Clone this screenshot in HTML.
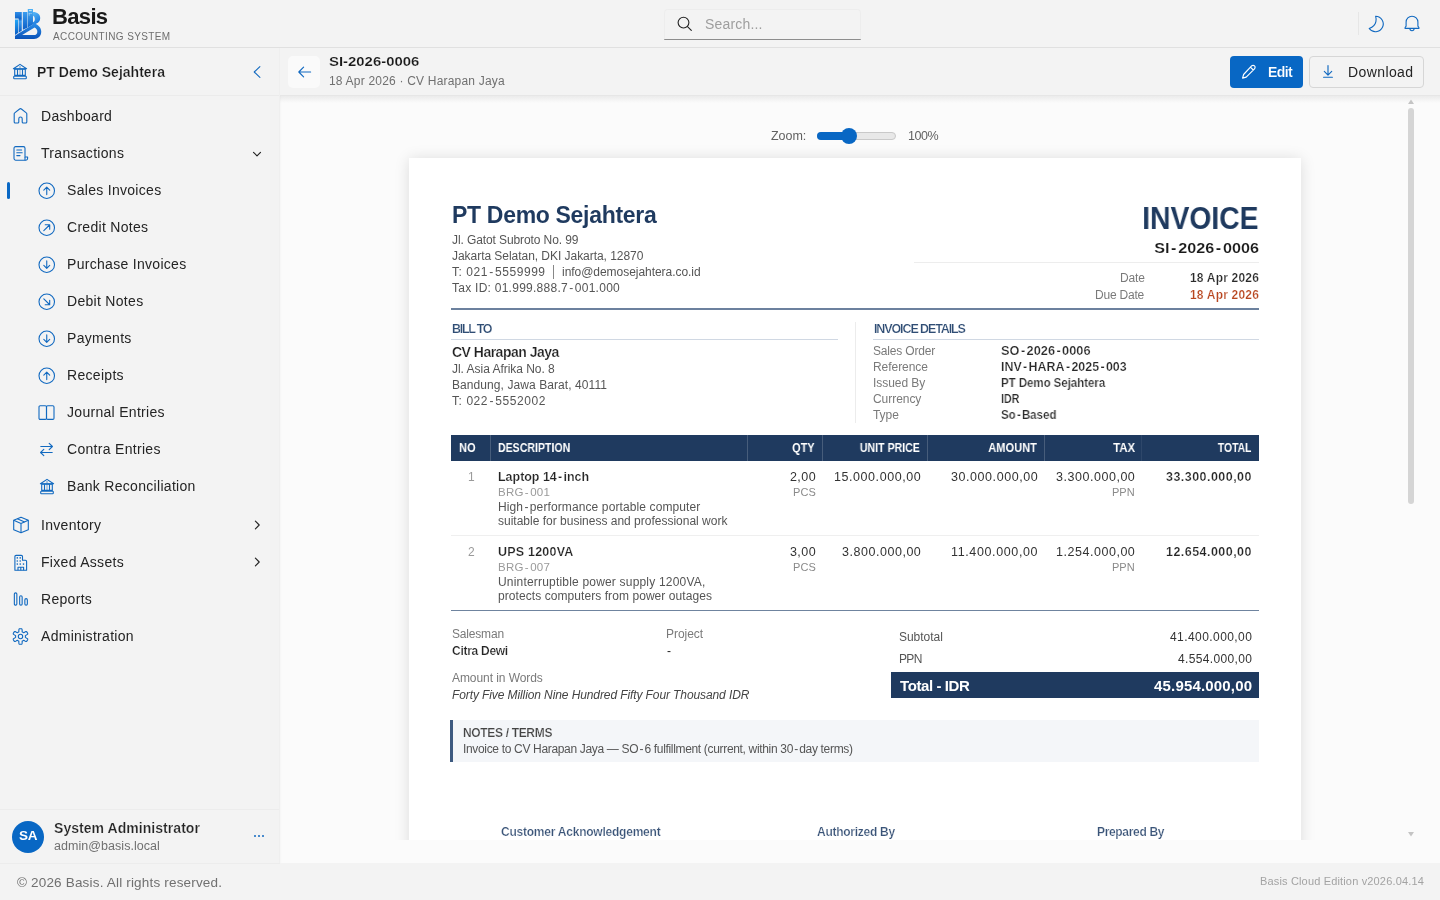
<!DOCTYPE html>
<html><head><meta charset="utf-8"><style>
*{box-sizing:border-box;margin:0;padding:0}
html,body{width:1440px;height:900px;overflow:hidden;background:#f3f3f3;font-family:"Liberation Sans",sans-serif;color:#242424}
.t{position:absolute;white-space:nowrap;line-height:0;will-change:transform}
.b{position:absolute}
svg{position:absolute;display:block;overflow:visible}
</style></head><body>
<div class="b" style="left:0px;top:0px;width:1440px;height:47px;background:#f3f3f3"></div>
<div class="b" style="left:0px;top:47px;width:1440px;height:1px;background:#e0e0e0"></div>
<svg style="left:8px;top:4px;" width="40" height="40" viewBox="0 0 900 900"><defs>
<linearGradient id="g1" x1="0" y1="0" x2="0" y2="1"><stop offset="0" stop-color="#22a6f6"/><stop offset="1" stop-color="#0b5cc4"/></linearGradient>
<linearGradient id="g2" x1="0" y1="0" x2="0" y2="1"><stop offset="0" stop-color="#2f8ee8"/><stop offset="0.33" stop-color="#0d62c8"/><stop offset="0.45" stop-color="#3b9cf0"/><stop offset="1" stop-color="#0d5fc4"/></linearGradient>
<linearGradient id="g3" x1="0" y1="0" x2="0" y2="1"><stop offset="0" stop-color="#3a9cef"/><stop offset="1" stop-color="#0c5ec6"/></linearGradient>
<linearGradient id="g4" x1="0" y1="0" x2="0" y2="1"><stop offset="0" stop-color="#4fb2f6"/><stop offset="1" stop-color="#0f64cb"/></linearGradient>
<linearGradient id="g5" x1="0" y1="0" x2="0.4" y2="1"><stop offset="0" stop-color="#5ab9f8"/><stop offset="1" stop-color="#1876dc"/></linearGradient>
<linearGradient id="g6" x1="0" y1="0" x2="0" y2="1"><stop offset="0" stop-color="#2a8de8"/><stop offset="1" stop-color="#0a52b8"/></linearGradient>
</defs>
<path fill="url(#g2)" d="M157,180 H310 V600 L238,646 V324 H157 Z"/>
<path fill="url(#g1)" d="M157,351 H225 V654 L157,697 Z"/>
<path fill="url(#g3)" d="M333,180 H436 V536 L333,582 Z"/>
<path fill="url(#g4)" d="M445,112 H562 V462 L445,530 Z"/>
<path fill="url(#g5)" fill-rule="evenodd" d="M562,180 C662,180 725,235 725,315 C725,380 690,418 640,440 L562,486 Z M562,262 V410 C592,398 606,368 603,330 C600,292 588,270 562,262 Z"/>
<path fill="url(#g6)" fill-rule="evenodd" d="M157,716 L592,438 C690,470 748,535 748,620 C748,725 672,788 585,788 H157 Z M318,700 H580 C628,700 660,668 660,622 C660,580 636,548 598,528 Z"/>
<g fill="#f3f3f3" opacity="0.9"><rect x="472" y="140" width="62" height="20"/><rect x="466" y="205" width="24" height="16"/><rect x="506" y="205" width="24" height="16"/><rect x="466" y="238" width="24" height="16"/></g>
</svg>
<div class="t" style="top:17px;font-size:22px;color:#1a1a1a;font-weight:bold;letter-spacing:-0.66px;left:51.9px;">Basis</div>
<div class="t" style="top:37px;font-size:10px;color:#6e6e6e;letter-spacing:0.38px;left:52.8px;">ACCOUNTING SYSTEM</div>
<div class="b" style="left:664px;top:9px;width:197px;height:31px;border:1px solid #ededed;border-bottom:none;border-radius:4px 4px 0 0;background:#f3f3f3"></div>
<div class="b" style="left:664px;top:39px;width:197px;height:1px;background:#8d8d8d;border-radius:0 0 2px 2px"></div>
<svg style="left:676px;top:16px;" width="18" height="18" viewBox="0 0 18 18"><circle cx="7.5" cy="6.6" r="5.4" fill="none" stroke="#242424" stroke-width="1.1"/><path d="M11.5,10.6 L15.3,14.3" stroke="#242424" stroke-width="1.15" stroke-linecap="round"/></svg>
<div class="t" style="top:24px;font-size:14px;color:#9e9e9e;letter-spacing:0.17px;left:705.2px;">Search...</div>
<div class="b" style="left:1358px;top:12px;width:1px;height:23px;background:#e6e6e6"></div>
<svg style="left:1366px;top:14px;" width="20" height="20" viewBox="0 0 20 20"><path d="M9.6,2.2 A7.75,7.75 0 1 1 3.2,14.5 C6.6,13.1 9.3,10.9 9.9,7.6 C10.2,5.7 10.1,3.7 9.6,2.2 Z" fill="none" stroke="#1169c0" stroke-width="1.1" stroke-linejoin="round"/></svg>
<svg style="left:1402px;top:14px;" width="20" height="20" viewBox="0 0 20 20"><path d="M4.1,12.2 V8.1 C4.1,4.7 6.7,2.2 10,2.2 C13.3,2.2 15.9,4.7 15.9,8.1 V12.2 L16.9,13.5 V14.4 H3.1 V13.5 Z" fill="none" stroke="#1169c0" stroke-width="1.1" stroke-linejoin="round"/><path d="M7.9,14.6 A2.1,2.1 0 0 0 12.1,14.6" fill="none" stroke="#1169c0" stroke-width="1.1"/></svg>
<div class="b" style="left:0px;top:48px;width:280px;height:815px;background:#f3f3f3"></div>
<div class="b" style="left:0px;top:95px;width:280px;height:1px;background:#ebebeb"></div>
<svg style="left:8px;top:60px;" width="24" height="24" viewBox="0 0 24 24"><g fill="none" stroke="#1169c0" stroke-width="1.1" stroke-linejoin="round"><path d="M5.4,8.8 L12,4.4 L18.6,8.8 Z"/><rect x="6.7" y="9.1" width="10.6" height="6.3"/><path d="M9.5,9.2 V15.3 M14.5,9.2 V15.3"/><rect x="5.7" y="16.2" width="12.6" height="2.5" rx="0.7"/></g><path d="M12,9.4 V15.2" stroke="#1169c0" stroke-width="1" opacity="0.55"/><rect x="11.4" y="6.2" width="1.2" height="1.6" fill="#1169c0" opacity="0.7"/></svg>
<div class="t" style="top:72px;font-size:14px;color:#1a1a1a;font-weight:bold;letter-spacing:0.02px;left:36.6px;-webkit-text-stroke:0.22px #f3f3f3;">PT Demo Sejahtera</div>
<svg style="left:249.5px;top:65px;" width="14" height="14" viewBox="0 0 14 14"><path d="M9.9,1.6 L4.2,7 L9.9,12.4" fill="none" stroke="#1169c0" stroke-width="1.05" stroke-linecap="round" stroke-linejoin="round"/></svg>
<svg style="left:12px;top:107px;" width="17" height="17" viewBox="0 0 17 17"><path d="M2.2,6.9 C2.2,6.5 2.4,6.1 2.7,5.9 L7.6,2 C8.1,1.6 8.9,1.6 9.4,2 L14.3,5.9 C14.6,6.1 14.8,6.5 14.8,6.9 V15 C14.8,15.6 14.4,16 13.8,16 H11.2 C10.6,16 10.2,15.6 10.2,15 V11.8 C10.2,10.8 9.4,10 8.5,10 C7.6,10 6.8,10.8 6.8,11.8 V15 C6.8,15.6 6.4,16 5.8,16 H3.2 C2.6,16 2.2,15.6 2.2,15 Z" fill="none" stroke="#1169c0" stroke-width="1.1"/></svg>
<div class="t" style="top:116px;font-size:14px;color:#242424;letter-spacing:0.30px;left:41.3px;">Dashboard</div>
<svg style="left:12px;top:145px;" width="17" height="17" viewBox="0 0 17 17"><g fill="none" stroke="#1169c0" stroke-width="1.1" stroke-linejoin="round"><path d="M13,12 V3.2 C13,2.3 12.3,1.6 11.4,1.6 H3.6 C2.7,1.6 2,2.3 2,3.2 V13.6 C2,14.5 2.7,15.2 3.6,15.2 H14 C14.9,15.2 15.6,14.5 15.6,13.6 V12 Z"/><path d="M13,15.2 V12" /><path d="M4.8,5 H9.6 M4.8,7.8 H10.2 M4.8,10.6 H8" stroke-linecap="round"/></g></svg>
<div class="t" style="top:153px;font-size:14px;color:#242424;letter-spacing:0.30px;left:41.3px;">Transactions</div>
<svg style="left:251px;top:149px;" width="12" height="9" viewBox="0 0 12 9"><path d="M2.5,3.3 L6,6.8 L9.5,3.3" fill="none" stroke="#242424" stroke-width="1.15" stroke-linecap="round" stroke-linejoin="round"/></svg>
<div class="b" style="left:7px;top:182px;width:3px;height:17px;background:#0867c4;border-radius:2px"></div>
<svg style="left:37.7px;top:181.5px;" width="18" height="18" viewBox="0 0 18 18"><circle cx="8.75" cy="8.75" r="7.75" fill="none" stroke="#1169c0" stroke-width="1.1"/><path d="M8.75,12.6 V5.3 M5.8,8.1 L8.75,5.2 L11.7,8.1" fill="none" stroke="#1169c0" stroke-width="1.1" stroke-linecap="round" stroke-linejoin="round"/></svg>
<div class="t" style="top:190px;font-size:14px;color:#242424;letter-spacing:0.30px;left:67.2px;">Sales Invoices</div>
<svg style="left:37.7px;top:218.5px;" width="18" height="18" viewBox="0 0 18 18"><circle cx="8.75" cy="8.75" r="7.75" fill="none" stroke="#1169c0" stroke-width="1.1"/><path d="M5.8,11.7 L11.5,6 M7.2,5.8 H11.7 V10.3" fill="none" stroke="#1169c0" stroke-width="1.1" stroke-linecap="round" stroke-linejoin="round"/></svg>
<div class="t" style="top:227px;font-size:14px;color:#242424;letter-spacing:0.30px;left:67.2px;">Credit Notes</div>
<svg style="left:37.7px;top:255.5px;" width="18" height="18" viewBox="0 0 18 18"><circle cx="8.75" cy="8.75" r="7.75" fill="none" stroke="#1169c0" stroke-width="1.1"/><path d="M8.75,4.9 V12.2 M5.8,9.4 L8.75,12.3 L11.7,9.4" fill="none" stroke="#1169c0" stroke-width="1.1" stroke-linecap="round" stroke-linejoin="round"/></svg>
<div class="t" style="top:264px;font-size:14px;color:#242424;letter-spacing:0.30px;left:67.2px;">Purchase Invoices</div>
<svg style="left:37.7px;top:292.5px;" width="18" height="18" viewBox="0 0 18 18"><circle cx="8.75" cy="8.75" r="7.75" fill="none" stroke="#1169c0" stroke-width="1.1"/><path d="M5.8,5.8 L11.5,11.5 M11.7,7.2 V11.7 H7.2" fill="none" stroke="#1169c0" stroke-width="1.1" stroke-linecap="round" stroke-linejoin="round"/></svg>
<div class="t" style="top:301px;font-size:14px;color:#242424;letter-spacing:0.30px;left:67.2px;">Debit Notes</div>
<svg style="left:37.7px;top:329.5px;" width="18" height="18" viewBox="0 0 18 18"><circle cx="8.75" cy="8.75" r="7.75" fill="none" stroke="#1169c0" stroke-width="1.1"/><path d="M8.75,4.9 V12.2 M5.8,9.4 L8.75,12.3 L11.7,9.4" fill="none" stroke="#1169c0" stroke-width="1.1" stroke-linecap="round" stroke-linejoin="round"/></svg>
<div class="t" style="top:338px;font-size:14px;color:#242424;letter-spacing:0.30px;left:67.2px;">Payments</div>
<svg style="left:37.7px;top:366.5px;" width="18" height="18" viewBox="0 0 18 18"><circle cx="8.75" cy="8.75" r="7.75" fill="none" stroke="#1169c0" stroke-width="1.1"/><path d="M8.75,12.6 V5.3 M5.8,8.1 L8.75,5.2 L11.7,8.1" fill="none" stroke="#1169c0" stroke-width="1.1" stroke-linecap="round" stroke-linejoin="round"/></svg>
<div class="t" style="top:375px;font-size:14px;color:#242424;letter-spacing:0.30px;left:67.2px;">Receipts</div>
<svg style="left:38px;top:404px;" width="17" height="17" viewBox="0 0 17 17"><g fill="none" stroke="#1169c0" stroke-width="1.1"><rect x="1" y="1.8" width="7.5" height="13.6" rx="1.2"/><rect x="8.5" y="1.8" width="7.5" height="13.6" rx="1.2"/></g></svg>
<div class="t" style="top:412px;font-size:14px;color:#242424;letter-spacing:0.30px;left:67.2px;">Journal Entries</div>
<svg style="left:38px;top:441px;" width="17" height="17" viewBox="0 0 17 17"><g fill="none" stroke="#1169c0" stroke-width="1.15" stroke-linecap="round" stroke-linejoin="round"><path d="M2.8,5.5 H14.4 M11.2,2.4 L14.4,5.5 L11.2,8.6"/><path d="M14.2,11.5 H2.6 M5.8,8.4 L2.6,11.5 L5.8,14.6"/></g></svg>
<div class="t" style="top:449px;font-size:14px;color:#242424;letter-spacing:0.30px;left:67.2px;">Contra Entries</div>
<svg style="left:35.2px;top:474.7px;" width="24" height="24" viewBox="0 0 24 24"><g fill="none" stroke="#1169c0" stroke-width="1.1" stroke-linejoin="round"><path d="M5.4,8.8 L12,4.4 L18.6,8.8 Z"/><rect x="6.7" y="9.1" width="10.6" height="6.3"/><path d="M9.5,9.2 V15.3 M14.5,9.2 V15.3"/><rect x="5.7" y="16.2" width="12.6" height="2.5" rx="0.7"/></g><path d="M12,9.4 V15.2" stroke="#1169c0" stroke-width="1" opacity="0.55"/><rect x="11.4" y="6.2" width="1.2" height="1.6" fill="#1169c0" opacity="0.7"/></svg>
<div class="t" style="top:486px;font-size:14px;color:#242424;letter-spacing:0.30px;left:66.7px;">Bank Reconciliation</div>
<svg style="left:11.5px;top:516px;" width="18" height="18" viewBox="0 0 18 18"><g fill="none" stroke="#1169c0" stroke-width="1.1" stroke-linejoin="round"><path d="M9,1.2 L16.3,4.3 V13.7 L9,16.8 L1.7,13.7 V4.3 Z"/><path d="M1.7,4.3 L9,7.4 L16.3,4.3 M9,7.4 V16.8"/><path d="M5.3,2.7 L12.6,5.9" /></g></svg>
<div class="t" style="top:525px;font-size:14px;color:#242424;letter-spacing:0.30px;left:41.3px;">Inventory</div>
<svg style="left:252px;top:520px;" width="10" height="10" viewBox="0 0 10 10"><path d="M3.4,1.2 L7.2,5 L3.4,8.8" fill="none" stroke="#242424" stroke-width="1.15" stroke-linecap="round" stroke-linejoin="round"/></svg>
<svg style="left:12px;top:554px;" width="17" height="17" viewBox="0 0 17 17"><g fill="none" stroke="#1169c0" stroke-width="1.1" stroke-linejoin="round"><path d="M2.9,16.2 V2.6 C2.9,1.9 3.4,1.4 4.1,1.4 H9.3 C10,1.4 10.5,1.9 10.5,2.6 V6.2 H13.4 C14.1,6.2 14.6,6.7 14.6,7.4 V16.2 Z"/><path d="M6,16.2 V13.3 H11.6 V16.2 M8.8,13.3 V16.2"/></g><g fill="#1169c0"><circle cx="5.3" cy="3.9" r="0.8"/><circle cx="8.2" cy="3.9" r="0.8"/><circle cx="5.3" cy="7" r="0.8"/><circle cx="8.2" cy="7" r="0.8"/><circle cx="5.3" cy="10.1" r="0.8"/><circle cx="8.2" cy="10.1" r="0.8"/><circle cx="11.5" cy="10.1" r="0.8"/></g></svg>
<div class="t" style="top:562px;font-size:14px;color:#242424;letter-spacing:0.30px;left:41.3px;">Fixed Assets</div>
<svg style="left:252px;top:557px;" width="10" height="10" viewBox="0 0 10 10"><path d="M3.4,1.2 L7.2,5 L3.4,8.8" fill="none" stroke="#242424" stroke-width="1.15" stroke-linecap="round" stroke-linejoin="round"/></svg>
<svg style="left:12px;top:591px;" width="17" height="17" viewBox="0 0 17 17"><g fill="none" stroke="#1169c0" stroke-width="1.1"><rect x="2.35" y="1.85" width="2.5" height="12.3" rx="1.25"/><rect x="7.65" y="4.75" width="2.5" height="9.4" rx="1.25"/><rect x="12.85" y="7.65" width="2.5" height="6.5" rx="1.25"/></g></svg>
<div class="t" style="top:599px;font-size:14px;color:#242424;letter-spacing:0.30px;left:41.3px;">Reports</div>
<svg style="left:12.3px;top:628.3px;" width="17" height="17" viewBox="0 0 17 17"><g fill="none" stroke="#1169c0" stroke-width="1.1" stroke-linejoin="round"><path d="M8.50,0.70 L8.77,0.70 L9.04,0.72 L9.32,0.74 L9.59,0.78 L9.85,0.82 L10.03,1.32 L10.12,2.02 L10.16,2.72 L10.16,3.40 L10.18,3.90 L10.34,3.96 L10.49,4.02 L10.65,4.10 L10.80,4.17 L10.95,4.26 L11.10,4.34 L11.24,4.44 L11.38,4.54 L11.52,4.64 L11.65,4.75 L12.09,4.51 L12.68,4.17 L13.31,3.86 L13.95,3.59 L14.48,3.49 L14.65,3.70 L14.81,3.92 L14.97,4.14 L15.11,4.37 L15.25,4.60 L15.39,4.84 L15.51,5.08 L15.63,5.33 L15.73,5.58 L15.83,5.83 L15.48,6.23 L14.92,6.66 L14.34,7.04 L13.75,7.38 L13.33,7.65 L13.35,7.82 L13.37,7.99 L13.39,8.16 L13.40,8.33 L13.40,8.50 L13.40,8.67 L13.39,8.84 L13.37,9.01 L13.35,9.18 L13.33,9.35 L13.75,9.62 L14.34,9.96 L14.92,10.34 L15.48,10.77 L15.83,11.17 L15.73,11.42 L15.63,11.67 L15.51,11.92 L15.39,12.16 L15.25,12.40 L15.11,12.63 L14.97,12.86 L14.81,13.08 L14.65,13.30 L14.48,13.51 L13.95,13.41 L13.31,13.14 L12.68,12.83 L12.09,12.49 L11.65,12.25 L11.52,12.36 L11.38,12.46 L11.24,12.56 L11.10,12.66 L10.95,12.74 L10.80,12.83 L10.65,12.90 L10.49,12.98 L10.34,13.04 L10.18,13.10 L10.16,13.60 L10.16,14.28 L10.12,14.98 L10.03,15.68 L9.85,16.18 L9.59,16.22 L9.32,16.26 L9.04,16.28 L8.77,16.30 L8.50,16.30 L8.23,16.30 L7.96,16.28 L7.68,16.26 L7.41,16.22 L7.15,16.18 L6.97,15.68 L6.88,14.98 L6.84,14.28 L6.84,13.60 L6.82,13.10 L6.66,13.04 L6.51,12.98 L6.35,12.90 L6.20,12.83 L6.05,12.74 L5.90,12.66 L5.76,12.56 L5.62,12.46 L5.48,12.36 L5.35,12.25 L4.91,12.49 L4.32,12.83 L3.69,13.14 L3.05,13.41 L2.52,13.51 L2.35,13.30 L2.19,13.08 L2.03,12.86 L1.89,12.63 L1.75,12.40 L1.61,12.16 L1.49,11.92 L1.37,11.67 L1.27,11.42 L1.17,11.17 L1.52,10.77 L2.08,10.34 L2.66,9.96 L3.25,9.62 L3.67,9.35 L3.65,9.18 L3.63,9.01 L3.61,8.84 L3.60,8.67 L3.60,8.50 L3.60,8.33 L3.61,8.16 L3.63,7.99 L3.65,7.82 L3.67,7.65 L3.25,7.38 L2.66,7.04 L2.08,6.66 L1.52,6.23 L1.17,5.83 L1.27,5.58 L1.37,5.33 L1.49,5.08 L1.61,4.84 L1.75,4.60 L1.89,4.37 L2.03,4.14 L2.19,3.92 L2.35,3.70 L2.52,3.49 L3.05,3.59 L3.69,3.86 L4.32,4.17 L4.91,4.51 L5.35,4.75 L5.48,4.64 L5.62,4.54 L5.76,4.44 L5.90,4.34 L6.05,4.26 L6.20,4.17 L6.35,4.10 L6.51,4.02 L6.66,3.96 L6.82,3.90 L6.84,3.40 L6.84,2.72 L6.88,2.02 L6.97,1.32 L7.15,0.82 L7.41,0.78 L7.68,0.74 L7.96,0.72 L8.23,0.70 Z"/><circle cx="8.5" cy="8.5" r="2.2"/></g></svg>
<div class="t" style="top:636px;font-size:14px;color:#242424;letter-spacing:0.30px;left:41.3px;">Administration</div>
<div class="b" style="left:0px;top:809px;width:280px;height:1px;background:#ececec"></div>
<div class="b" style="left:12px;top:820.5px;width:32px;height:32px;border-radius:50%;background:#0867c4"></div>
<div class="t" style="top:836.3px;font-size:13.5px;color:#ffffff;font-weight:bold;letter-spacing:-0.28px;left:18.6px;">SA</div>
<div class="t" style="top:828px;font-size:14px;color:#242424;font-weight:bold;letter-spacing:0.05px;left:54.3px;-webkit-text-stroke:0.22px #f3f3f3;">System Administrator</div>
<div class="t" style="top:846px;font-size:12.5px;color:#707070;letter-spacing:0.05px;left:54.3px;">admin@basis.local</div>
<div class="b" style="left:254.0px;top:835px;width:2.1px;height:2.1px;border-radius:50%;background:#1169c0"></div>
<div class="b" style="left:258.2px;top:835px;width:2.1px;height:2.1px;border-radius:50%;background:#1169c0"></div>
<div class="b" style="left:262.4px;top:835px;width:2.1px;height:2.1px;border-radius:50%;background:#1169c0"></div>
<div class="b" style="left:0px;top:863px;width:1440px;height:37px;background:#f3f3f3"></div>
<div class="b" style="left:0px;top:863px;width:280px;height:1px;background:#ececec"></div>
<div class="t" style="top:883px;font-size:13.5px;color:#707070;letter-spacing:0.18px;left:16.8px;">© 2026 Basis. All rights reserved.</div>
<div class="t" style="top:881px;font-size:11px;color:#a3a3a3;letter-spacing:0.16px;right:16.54px;text-align:right;">Basis Cloud Edition v2026.04.14</div>
<div class="b" style="left:280px;top:48px;width:1160px;height:47px;background:#f3f3f3"></div>
<div class="b" style="left:280px;top:95px;width:1160px;height:1px;background:#e6e6e6"></div>
<div class="b" style="left:288px;top:56px;width:32px;height:32px;background:#fafafa;border-radius:5px"></div>
<svg style="left:296px;top:64px;" width="16" height="16" viewBox="0 0 16 16"><path d="M14.6,8 H3 M7.6,3.2 L2.8,8 L7.6,12.8" fill="none" stroke="#1169c0" stroke-width="1.15" stroke-linecap="round" stroke-linejoin="round"/></svg>
<div class="t" style="top:62px;font-size:13.5px;color:#1a1a1a;font-weight:bold;left:328.6px;transform:scaleX(1.1038);transform-origin:left center;-webkit-text-stroke:0.15px #f3f3f3;">SI-2026-0006</div>
<div class="t" style="top:81px;font-size:12px;color:#707070;letter-spacing:0.20px;left:328.6px;">18 Apr 2026 · CV Harapan Jaya</div>
<div class="b" style="left:1230px;top:56px;width:73px;height:32px;background:#0867c4;border-radius:4px"></div>
<svg style="left:1240px;top:63px;" width="18" height="18" viewBox="0 0 18 18"><path d="M11.6,2.9 C12.4,2.1 13.7,2.1 14.5,2.9 C15.3,3.7 15.3,5 14.5,5.8 L6.2,14.1 L2.6,15.1 L3.6,11.5 Z M10.4,4.1 L13.3,7" fill="none" stroke="#fff" stroke-width="1.15" stroke-linejoin="round"/></svg>
<div class="t" style="top:72px;font-size:14px;color:#ffffff;font-weight:bold;letter-spacing:-0.56px;left:1268px;-webkit-text-stroke:0.15px #0867c4;">Edit</div>
<div class="b" style="left:1309px;top:56px;width:115px;height:32px;border:1px solid #d6d6d6;border-radius:4px;background:#f3f3f3"></div>
<svg style="left:1320px;top:63px;" width="16" height="16" viewBox="0 0 16 16"><path d="M8,2.6 V12 M4.3,8.4 L8,12.1 L11.7,8.4 M3.6,14.2 H12.4" fill="none" stroke="#1169c0" stroke-width="1.15" stroke-linecap="round" stroke-linejoin="round"/></svg>
<div class="t" style="top:72px;font-size:14px;color:#242424;letter-spacing:0.40px;left:1347.5px;">Download</div>
<div class="b" style="left:280px;top:96px;width:1160px;height:767px;background:#fbfbfb"></div>
<div class="b" style="left:280px;top:96px;width:1160px;height:7px;background:linear-gradient(#ebebeb,rgba(251,251,251,0))"></div>
<div class="b" style="left:279px;top:48px;width:1px;height:815px;background:#efefef"></div>
<div class="b" style="left:280px;top:96px;width:2px;height:767px;background:linear-gradient(90deg,rgba(0,0,0,0.025),rgba(0,0,0,0))"></div>
<div class="t" style="top:136px;font-size:12.5px;color:#616161;letter-spacing:-0.04px;left:771.3px;">Zoom:</div>
<div class="b" style="left:817px;top:132px;width:79px;height:8px;background:#e8e8e8;border:1px solid #c9c9c9;border-radius:4px"></div>
<div class="b" style="left:817px;top:132px;width:33px;height:8px;background:#0867c4;border-radius:4px 0 0 4px"></div>
<div class="b" style="left:840.5px;top:127.7px;width:16px;height:16px;border-radius:50%;background:#0867c4"></div>
<div class="t" style="top:136px;font-size:12.5px;color:#616161;letter-spacing:-0.44px;left:908px;">100%</div>
<svg style="left:1407px;top:98px;" width="8" height="8" viewBox="0 0 8 8"><path d="M1,6 L4,1.5 L7,6 Z" fill="#c4c4c4"/></svg>
<div class="b" style="left:1408px;top:108px;width:6px;height:396px;background:#d5d5d5;border-radius:3px"></div>
<svg style="left:1407px;top:830px;" width="8" height="8" viewBox="0 0 8 8"><path d="M1,2 L4,6.5 L7,2 Z" fill="#c4c4c4"/></svg>
<div style="position:absolute;left:0;top:0;width:1440px;height:900px;clip-path:inset(96px 0 60px 280px)">
<div class="b" style="left:409px;top:158px;width:892px;height:720px;background:#fff;box-shadow:0 1px 14px rgba(0,0,0,0.13)"></div>
<div class="t" style="top:215px;font-size:23px;color:#1f3a5f;font-weight:bold;letter-spacing:-0.31px;left:452.3px;">PT Demo Sejahtera</div>
<div class="t" style="top:240px;font-size:12px;color:#555555;letter-spacing:-0.10px;left:452.3px;">Jl. Gatot Subroto No. 99</div>
<div class="t" style="top:256px;font-size:12px;color:#555555;letter-spacing:-0.04px;left:452.3px;">Jakarta Selatan, DKI Jakarta, 12870</div>
<div class="t" style="top:272px;font-size:12px;color:#555555;letter-spacing:0.54px;left:452.3px;">T: 021<span style="margin:0 1.3px">-</span>5559999</div>
<div class="b" style="left:553.3px;top:264.5px;width:1px;height:14px;background:#888"></div>
<div class="t" style="top:272px;font-size:12px;color:#555555;letter-spacing:-0.04px;left:561.9px;">info@demosejahtera.co.id</div>
<div class="t" style="top:288px;font-size:12px;color:#555555;letter-spacing:0.26px;left:452.3px;">Tax ID: 01.999.888.7<span style="margin:0 1.3px">-</span>001.000</div>
<div class="t" style="top:218px;font-size:31.5px;color:#1f3a5f;font-weight:bold;right:181.30px;text-align:right;transform:scaleX(0.8979);transform-origin:right center;">INVOICE</div>
<div class="t" style="top:248px;font-size:14.5px;color:#1a1a1a;font-weight:bold;right:181.30px;text-align:right;transform:scaleX(1.1154);transform-origin:right center;-webkit-text-stroke:0.15px #fff;">SI<span style="margin:0 1.5px">-</span>2026<span style="margin:0 1.5px">-</span>0006</div>
<div class="b" style="left:914px;top:262px;width:345px;height:1px;background:#ededed"></div>
<div class="t" style="top:278px;font-size:12px;color:#7a7a7a;letter-spacing:-0.16px;right:295.46px;text-align:right;">Date</div>
<div class="t" style="top:278px;font-size:12px;color:#2a2a2a;font-weight:bold;letter-spacing:0.19px;right:181.11px;text-align:right;-webkit-text-stroke:0.22px #fff;">18 Apr 2026</div>
<div class="t" style="top:295px;font-size:12px;color:#7a7a7a;letter-spacing:-0.21px;right:295.51px;text-align:right;">Due Date</div>
<div class="t" style="top:295px;font-size:12px;color:#b8461f;font-weight:bold;letter-spacing:0.19px;right:181.11px;text-align:right;-webkit-text-stroke:0.22px #fff;">18 Apr 2026</div>
<div class="b" style="left:451px;top:308px;width:808px;height:2px;background:#6c819e"></div>
<div class="t" style="top:329px;font-size:12.5px;color:#2f4d74;font-weight:bold;letter-spacing:-1.26px;left:452.3px;-webkit-text-stroke:0.2px #fff;">BILL TO</div>
<div class="b" style="left:451px;top:338.5px;width:387px;height:1.5px;background:#d0d8e3"></div>
<div class="t" style="top:352px;font-size:14px;color:#222;font-weight:bold;letter-spacing:-0.51px;left:452.3px;-webkit-text-stroke:0.22px #fff;">CV Harapan Jaya</div>
<div class="t" style="top:369px;font-size:12px;color:#555555;letter-spacing:-0.03px;left:452.3px;">Jl. Asia Afrika No. 8</div>
<div class="t" style="top:385px;font-size:12px;color:#555555;letter-spacing:0.08px;left:452.3px;">Bandung, Jawa Barat, 40111</div>
<div class="t" style="top:401px;font-size:12px;color:#555555;letter-spacing:0.57px;left:452.3px;">T: 022<span style="margin:0 1.3px">-</span>5552002</div>
<div class="b" style="left:855px;top:322px;width:1px;height:101px;background:#ececec"></div>
<div class="t" style="top:329px;font-size:12.5px;color:#2f4d74;font-weight:bold;letter-spacing:-1.11px;left:873.5px;-webkit-text-stroke:0.2px #fff;">INVOICE DETAILS</div>
<div class="b" style="left:873px;top:338.5px;width:386px;height:1.5px;background:#d0d8e3"></div>
<div class="t" style="top:351px;font-size:12px;color:#7a7a7a;letter-spacing:-0.18px;left:872.9px;">Sales Order</div>
<div class="t" style="top:351px;font-size:12px;color:#2a2a2a;font-weight:bold;left:1001.3px;transform:scaleX(1.0664);transform-origin:left center;-webkit-text-stroke:0.22px #fff;">SO<span style="margin:0 1.3px">-</span>2026<span style="margin:0 1.3px">-</span>0006</div>
<div class="t" style="top:367px;font-size:12px;color:#7a7a7a;letter-spacing:-0.05px;left:872.9px;">Reference</div>
<div class="t" style="top:367px;font-size:12px;color:#2a2a2a;font-weight:bold;left:1001.3px;transform:scaleX(1.0372);transform-origin:left center;-webkit-text-stroke:0.22px #fff;">INV<span style="margin:0 1.3px">-</span>HARA<span style="margin:0 1.3px">-</span>2025<span style="margin:0 1.3px">-</span>003</div>
<div class="t" style="top:383px;font-size:12px;color:#7a7a7a;letter-spacing:-0.05px;left:872.9px;">Issued By</div>
<div class="t" style="top:383px;font-size:12px;color:#2a2a2a;font-weight:bold;left:1001.3px;transform:scaleX(0.9527);transform-origin:left center;-webkit-text-stroke:0.22px #fff;">PT Demo Sejahtera</div>
<div class="t" style="top:399px;font-size:12px;color:#7a7a7a;letter-spacing:-0.05px;left:872.9px;">Currency</div>
<div class="t" style="top:399px;font-size:12px;color:#2a2a2a;font-weight:bold;left:1001.3px;transform:scaleX(0.8903);transform-origin:left center;-webkit-text-stroke:0.22px #fff;">IDR</div>
<div class="t" style="top:415px;font-size:12px;color:#7a7a7a;letter-spacing:-0.05px;left:872.9px;">Type</div>
<div class="t" style="top:415px;font-size:12px;color:#2a2a2a;font-weight:bold;left:1001.3px;transform:scaleX(0.9543);transform-origin:left center;-webkit-text-stroke:0.22px #fff;">So<span style="margin:0 1.3px">-</span>Based</div>
<div class="b" style="left:451px;top:435px;width:808px;height:26px;background:#1f3a5f"></div>
<div class="b" style="left:490px;top:435px;width:1px;height:26px;background:rgba(255,255,255,0.18)"></div>
<div class="b" style="left:747px;top:435px;width:1px;height:26px;background:rgba(255,255,255,0.18)"></div>
<div class="b" style="left:822px;top:435px;width:1px;height:26px;background:rgba(255,255,255,0.18)"></div>
<div class="b" style="left:927px;top:435px;width:1px;height:26px;background:rgba(255,255,255,0.18)"></div>
<div class="b" style="left:1044px;top:435px;width:1px;height:26px;background:rgba(255,255,255,0.18)"></div>
<div class="b" style="left:1141px;top:435px;width:1px;height:26px;background:rgba(255,255,255,0.07)"></div>
<div class="t" style="top:448px;font-size:12.5px;color:#fff;font-weight:bold;left:459.1px;transform:scaleX(0.8907);transform-origin:left center;">NO</div>
<div class="t" style="top:448px;font-size:12.5px;color:#fff;font-weight:bold;left:498px;transform:scaleX(0.8452);transform-origin:left center;">DESCRIPTION</div>
<div class="t" style="top:448px;font-size:12.5px;color:#fff;font-weight:bold;right:625.40px;text-align:right;transform:scaleX(0.8795);transform-origin:right center;">QTY</div>
<div class="t" style="top:448px;font-size:12.5px;color:#fff;font-weight:bold;right:520.00px;text-align:right;transform:scaleX(0.8470);transform-origin:right center;">UNIT PRICE</div>
<div class="t" style="top:448px;font-size:12.5px;color:#fff;font-weight:bold;right:403.60px;text-align:right;transform:scaleX(0.8860);transform-origin:right center;">AMOUNT</div>
<div class="t" style="top:448px;font-size:12.5px;color:#fff;font-weight:bold;right:305.00px;text-align:right;transform:scaleX(0.9097);transform-origin:right center;">TAX</div>
<div class="t" style="top:448px;font-size:12.5px;color:#fff;font-weight:bold;right:188.70px;text-align:right;transform:scaleX(0.8321);transform-origin:right center;">TOTAL</div>
<div class="t" style="top:477px;font-size:12px;color:#9a9a9a;right:965.60px;text-align:right;">1</div>
<div class="t" style="top:477px;font-size:12.5px;color:#242424;font-weight:bold;letter-spacing:-0.03px;left:498px;-webkit-text-stroke:0.22px #fff;">Laptop 14<span style="margin:0 1.3px">-</span>inch</div>
<div class="t" style="top:492px;font-size:11.5px;color:#9a9a9a;letter-spacing:0.21px;left:498px;">BRG<span style="margin:0 1.3px">-</span>001</div>
<div class="t" style="top:507px;font-size:12px;color:#555555;letter-spacing:0.11px;left:497.6px;">High<span style="margin:0 1.3px">-</span>performance portable computer</div>
<div class="t" style="top:521px;font-size:12px;color:#555555;left:497.6px;">suitable for business and professional work</div>
<div class="t" style="top:477px;font-size:12.5px;color:#333;letter-spacing:0.42px;right:623.58px;text-align:right;">2,00</div>
<div class="t" style="top:492px;font-size:11px;color:#8a8a8a;letter-spacing:0.13px;right:623.87px;text-align:right;">PCS</div>
<div class="t" style="top:477px;font-size:12.5px;color:#333;letter-spacing:0.56px;right:518.84px;text-align:right;">15.000.000,00</div>
<div class="t" style="top:477px;font-size:12.5px;color:#333;letter-spacing:0.56px;right:401.84px;text-align:right;">30.000.000,00</div>
<div class="t" style="top:477px;font-size:12.5px;color:#333;letter-spacing:0.53px;right:304.47px;text-align:right;">3.300.000,00</div>
<div class="t" style="top:492px;font-size:11px;color:#8a8a8a;letter-spacing:0.03px;right:304.97px;text-align:right;">PPN</div>
<div class="t" style="top:477px;font-size:12.5px;color:#242424;font-weight:bold;letter-spacing:0.46px;right:188.04px;text-align:right;-webkit-text-stroke:0.22px #fff;">33.300.000,00</div>
<div class="t" style="top:552px;font-size:12px;color:#9a9a9a;right:965.60px;text-align:right;">2</div>
<div class="t" style="top:552px;font-size:12.5px;color:#242424;font-weight:bold;letter-spacing:0.21px;left:498px;-webkit-text-stroke:0.22px #fff;">UPS 1200VA</div>
<div class="t" style="top:567px;font-size:11.5px;color:#9a9a9a;letter-spacing:0.21px;left:498px;">BRG<span style="margin:0 1.3px">-</span>007</div>
<div class="t" style="top:582px;font-size:12px;color:#555555;letter-spacing:0.19px;left:497.6px;">Uninterruptible power supply 1200VA,</div>
<div class="t" style="top:596px;font-size:12px;color:#555555;letter-spacing:0.07px;left:497.6px;">protects computers from power outages</div>
<div class="t" style="top:552px;font-size:12.5px;color:#333;letter-spacing:0.42px;right:623.58px;text-align:right;">3,00</div>
<div class="t" style="top:567px;font-size:11px;color:#8a8a8a;letter-spacing:0.13px;right:623.87px;text-align:right;">PCS</div>
<div class="t" style="top:552px;font-size:12.5px;color:#333;letter-spacing:0.53px;right:518.87px;text-align:right;">3.800.000,00</div>
<div class="t" style="top:552px;font-size:12.5px;color:#333;letter-spacing:0.63px;right:401.77px;text-align:right;">11.400.000,00</div>
<div class="t" style="top:552px;font-size:12.5px;color:#333;letter-spacing:0.53px;right:304.47px;text-align:right;">1.254.000,00</div>
<div class="t" style="top:567px;font-size:11px;color:#8a8a8a;letter-spacing:0.03px;right:304.97px;text-align:right;">PPN</div>
<div class="t" style="top:552px;font-size:12.5px;color:#242424;font-weight:bold;letter-spacing:0.46px;right:188.04px;text-align:right;-webkit-text-stroke:0.22px #fff;">12.654.000,00</div>
<div class="b" style="left:451px;top:535px;width:808px;height:1px;background:#efefef"></div>
<div class="b" style="left:451px;top:609.5px;width:808px;height:1px;background:#6f849f"></div>
<div class="t" style="top:634px;font-size:12px;color:#7a7a7a;letter-spacing:-0.18px;left:452.3px;">Salesman</div>
<div class="t" style="top:650.5px;font-size:12px;color:#242424;font-weight:bold;letter-spacing:-0.28px;left:452.3px;-webkit-text-stroke:0.22px #fff;">Citra Dewi</div>
<div class="t" style="top:634px;font-size:12px;color:#7a7a7a;letter-spacing:-0.04px;left:665.7px;">Project</div>
<div class="t" style="top:650.5px;font-size:12px;color:#242424;left:667px;">-</div>
<div class="t" style="top:678px;font-size:12px;color:#7a7a7a;letter-spacing:-0.07px;left:452.3px;">Amount in Words</div>
<div class="t" style="top:694.5px;font-size:12px;color:#444;font-style:italic;letter-spacing:-0.10px;left:452.3px;">Forty Five Million Nine Hundred Fifty Four Thousand IDR</div>
<div class="t" style="top:637px;font-size:12px;color:#555555;letter-spacing:-0.03px;left:898.7px;">Subtotal</div>
<div class="t" style="top:637px;font-size:12px;color:#333;letter-spacing:0.43px;right:187.27px;text-align:right;">41.400.000,00</div>
<div class="t" style="top:659px;font-size:12px;color:#555555;letter-spacing:-0.66px;left:898.7px;">PPN</div>
<div class="t" style="top:659px;font-size:12px;color:#333;letter-spacing:0.36px;right:187.34px;text-align:right;">4.554.000,00</div>
<div class="b" style="left:891px;top:672px;width:368px;height:26px;background:#1f3a5f"></div>
<div class="t" style="top:686.3px;font-size:15px;color:#fff;font-weight:bold;letter-spacing:-0.41px;left:899.5px;">Total - IDR</div>
<div class="t" style="top:686.3px;font-size:15px;color:#fff;font-weight:bold;letter-spacing:0.18px;right:187.52px;text-align:right;">45.954.000,00</div>
<div class="b" style="left:450px;top:720px;width:809px;height:42px;background:#f4f6f9"></div>
<div class="b" style="left:450px;top:720px;width:3px;height:42px;background:#3d5a80"></div>
<div class="t" style="top:733px;font-size:12px;color:#444;font-weight:bold;letter-spacing:-0.33px;left:463px;-webkit-text-stroke:0.22px #f4f6f9;">NOTES / TERMS</div>
<div class="t" style="top:748.6px;font-size:12px;color:#555555;letter-spacing:-0.33px;left:463px;">Invoice to CV Harapan Jaya — SO<span style="margin:0 1.3px">-</span>6 fulfillment (current, within 30<span style="margin:0 1.3px">-</span>day terms)</div>
<div class="t" style="top:832px;font-size:12px;color:#3a5478;font-weight:bold;letter-spacing:-0.23px;left:500.8px;-webkit-text-stroke:0.22px #fff;">Customer Acknowledgement</div>
<div class="t" style="top:832px;font-size:12px;color:#3a5478;font-weight:bold;letter-spacing:-0.27px;left:816.7px;-webkit-text-stroke:0.22px #fff;">Authorized By</div>
<div class="t" style="top:832px;font-size:12px;color:#3a5478;font-weight:bold;letter-spacing:-0.33px;left:1096.7px;-webkit-text-stroke:0.22px #fff;">Prepared By</div>
</div>
</body></html>
